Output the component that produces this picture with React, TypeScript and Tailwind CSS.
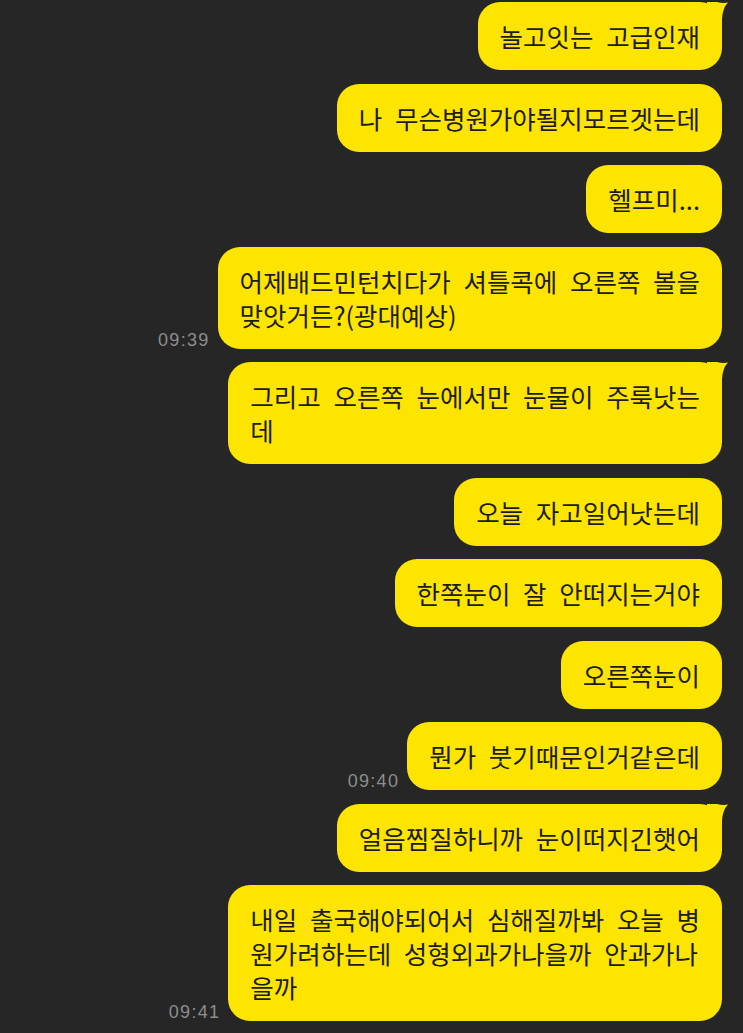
import React from "react";

type Msg = { lines: string[]; time?: string; tail?: boolean };

const messages: Msg[] = [
  { lines: ["놀고잇는 고급인재"], tail: true },
  { lines: ["나 무슨병원가야될지모르겟는데"] },
  { lines: ["헬프미..."] },
  { lines: ["어제배드민턴치다가 셔틀콕에 오른쪽 볼을", "맞앗거든?(광대예상)"], time: "09:39" },
  { lines: ["그리고 오른쪽 눈에서만 눈물이 주룩낫는", "데"], tail: true },
  { lines: ["오늘 자고일어낫는데"] },
  { lines: ["한쪽눈이 잘 안떠지는거야"] },
  { lines: ["오른쪽눈이"] },
  { lines: ["뭔가 붓기때문인거같은데"], time: "09:40" },
  { lines: ["얼음찜질하니까 눈이떠지긴햇어"], tail: true },
  {
    lines: ["내일 출국해야되어서 심해질까봐 오늘 병", "원가려하는데 성형외과가나을까 안과가나", "을까"],
    time: "09:41",
  },
];

function Tail() {
  return (
    <svg
      className="absolute top-0 right-[-7px]"
      width="22"
      height="24"
      viewBox="0 0 22 24"
    >
      <path d="M0 0 L10 0 Q16 1.5 21 0.5 Q15.5 6 15 17 L15 24 L0 24 Z" fill="#FEE500" />
    </svg>
  );
}

function Bubble({ msg }: { msg: Msg }) {
  return (
    <div className="flex items-end gap-[8px]">
      {msg.time && (
        <span className="font-['Liberation_Sans',Arial,sans-serif] text-[18px] leading-none tracking-[1.3px] text-[#8d8d8d]">
          {msg.time}
        </span>
      )}
      <div className="relative rounded-[22px] bg-[#FEE500] px-[22px] py-[17px] text-[25.5px] leading-[34px] text-[#1c1c1c] [word-spacing:7px]">
        {msg.tail && <Tail />}
        {msg.lines.map((l, i) => (
          <div key={i} className="relative whitespace-nowrap">
            {l}
          </div>
        ))}
      </div>
    </div>
  );
}

export default function App() {
  return (
    <div className="min-h-[1033px] w-full overflow-hidden bg-[#262626] font-['Noto_Sans_CJK_KR','Noto_Sans',sans-serif]">
      <div className="flex flex-col items-end gap-[13.5px] pr-[21px] pt-[2px]">
        {messages.map((m, i) => (
          <Bubble key={i} msg={m} />
        ))}
      </div>
    </div>
  );
}
